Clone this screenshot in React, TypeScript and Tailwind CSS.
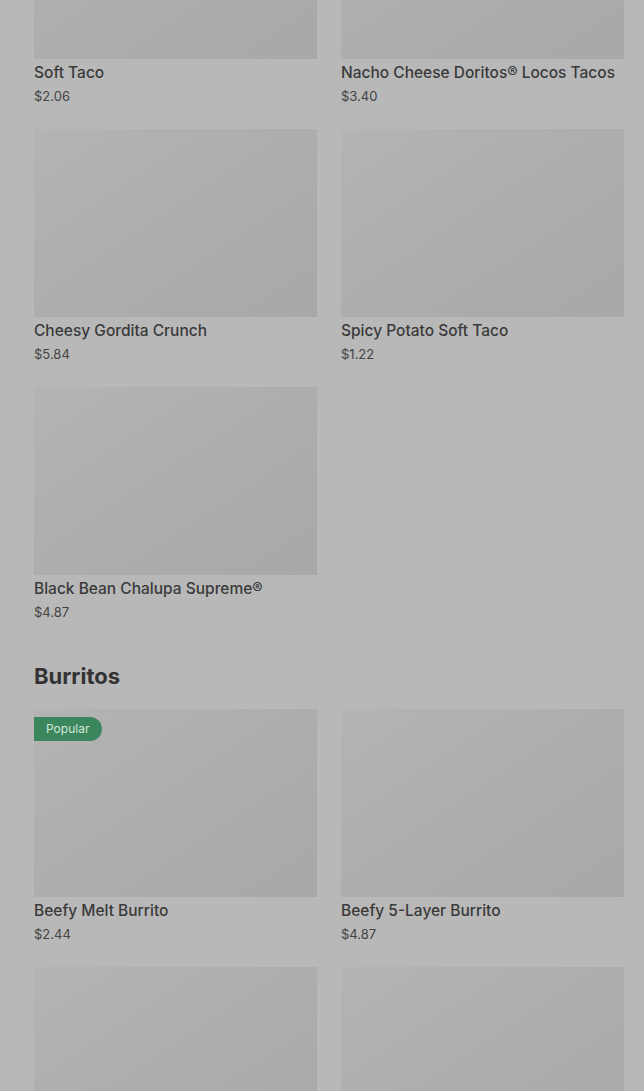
import React from 'react';

type Item = { name: string; price: string; popular?: boolean };

const tacos: Item[] = [
  { name: 'Soft Taco', price: '$2.06' },
  { name: 'Nacho Cheese Doritos® Locos Tacos', price: '$3.40' },
  { name: 'Cheesy Gordita Crunch', price: '$5.84' },
  { name: 'Spicy Potato Soft Taco', price: '$1.22' },
  { name: 'Black Bean Chalupa Supreme®', price: '$4.87' },
];

const burritos: Item[] = [
  { name: 'Beefy Melt Burrito', price: '$2.44', popular: true },
  { name: 'Beefy 5-Layer Burrito', price: '$4.87' },
  { name: 'Bean Burrito', price: '$1.99' },
  { name: 'Burrito Supreme®', price: '$4.39' },
];

function ItemCard({ item }: { item: Item }) {
  return (
    <div className="flex flex-col">
      <div className="relative h-[188px] bg-linear-to-br from-[#b4b4b4] via-[#adadad] to-[#a8a8a8]">
        {item.popular && (
          <span className="absolute left-0 top-[8px] h-[24px] pl-[12px] pr-[13px] flex items-center rounded-r-full bg-[#3b865d] text-[12px] text-[#d3e6da]">
            Popular
          </span>
        )}
      </div>
      <div className="mt-[4px] text-[15.5px] leading-5 font-medium text-[#3a3a3a] whitespace-nowrap">{item.name}</div>
      <div className="mt-[5px] text-[13px] leading-4 text-[#444444]">{item.price}</div>
    </div>
  );
}

export default function App() {
  return (
    <div className="h-screen bg-[#b8b8b8] overflow-hidden font-['Inter','Liberation_Sans',sans-serif]">
      <div className="-mt-[129px] pl-[34px] pr-[20px] pb-10">
        <div className="grid grid-cols-2 gap-x-[24px] gap-y-[25px]">
          {tacos.map((t) => (
            <ItemCard key={t.name} item={t} />
          ))}
        </div>

        <h2 className="mt-[42px] mb-[19px] text-[22px] leading-7 font-bold text-[#333333]">Burritos</h2>

        <div className="grid grid-cols-2 gap-x-[24px] gap-y-[25px]">
          {burritos.map((b) => (
            <ItemCard key={b.name} item={b} />
          ))}
        </div>
      </div>
    </div>
  );
}
